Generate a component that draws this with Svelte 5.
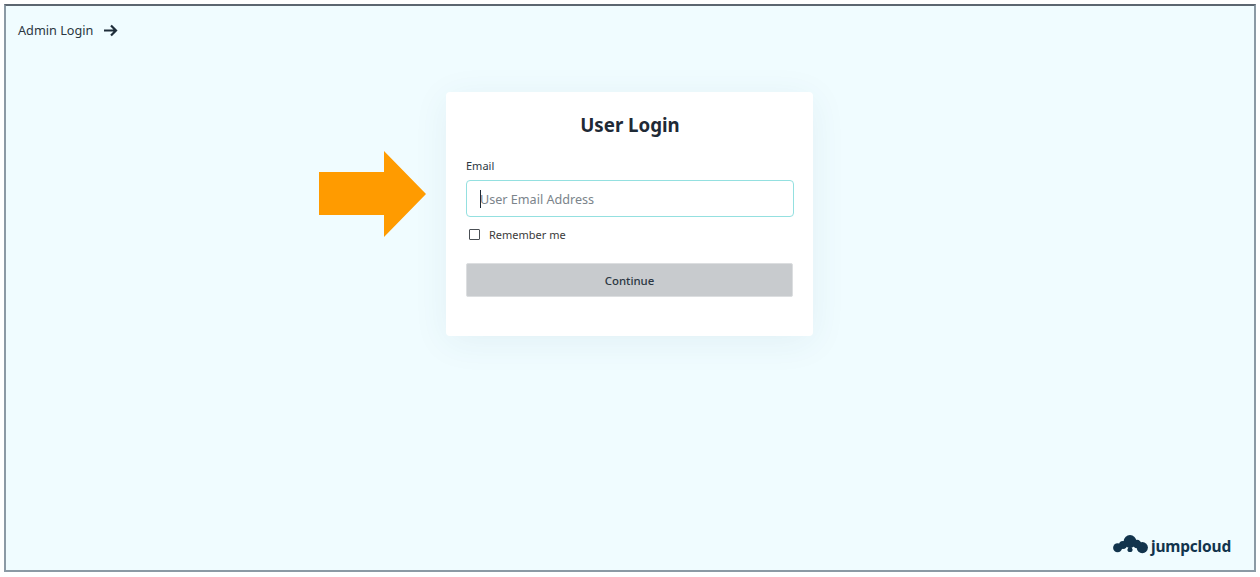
<script lang="ts">
  let email = $state('');
  let remember = $state(false);
</script>

<div class="page">
  <main class="frame">
    <a class="admin-link" href="#admin">
      Admin Login
      <svg width="15" height="13" viewBox="0 0 15 13" aria-hidden="true">
        <path d="M1 6.5h12M8 1.5l5 5-5 5" fill="none" stroke="#1f2d3a" stroke-width="2.2" />
      </svg>
    </a>

    <div class="card-wrap">
      <svg class="callout" width="108" height="86" viewBox="0 0 108 86" aria-hidden="true">
        <path d="M0 21h65V0l42 43-42 43V64H0z" fill="#ff9b00" />
      </svg>

      <form class="card">
        <h1>User Login</h1>
        <label class="field-label" for="email">Email</label>
        <div class="input-box">
          <span class="caret"></span>
          <input id="email" type="text" placeholder="User Email Address" bind:value={email} />
        </div>
        <label class="remember">
          <input type="checkbox" bind:checked={remember} />
          <span>Remember me</span>
        </label>
        <button type="button" class="continue">Continue</button>
      </form>
    </div>

    <div class="brand">
      <svg width="35" height="20" viewBox="0 0 35 20" aria-hidden="true">
        <g fill="#12344d">
          <circle cx="4.6" cy="12.8" r="4.5" />
          <circle cx="29.3" cy="12.6" r="5.6" />
          <circle cx="17" cy="6.5" r="6.4" />
          <circle cx="10" cy="10" r="4" />
          <circle cx="24" cy="9" r="4.2" />
          <circle cx="17" cy="14.5" r="2.6" />
        </g>
        <path d="M12.5 19v-3a3.5 3.5 0 0 1 2-3M21.5 19v-3a3.5 3.5 0 0 0-2-3" fill="none" stroke="#f0fcff" stroke-width="1.4" />
      </svg>
      <span>jumpcloud</span>
    </div>
  </main>
</div>

<style>
  :global(body) {
    margin: 0;
    background: #fff;
  }

  .page {
    height: 577px;
    box-sizing: border-box;
    padding: 4px 4px 5px 4px;
    font-family: 'Noto Sans', 'Open Sans', sans-serif;
    color: #212b36;
  }

  .frame {
    position: relative;
    height: 100%;
    box-sizing: border-box;
    display: flex;
    flex-direction: column;
    background: #f0fcff;
    border: 2px solid #8b9aa5;
    border-top: 2px solid #5c6670;
    padding: 15px 12px 14px;
  }

  .admin-link {
    display: flex;
    align-items: center;
    gap: 10px;
    height: 18px;
    font-size: 12.7px;
    color: #2b3742;
    text-decoration: none;
  }

  .card-wrap {
    position: relative;
    align-self: center;
    margin-top: 53px;
    margin-left: -1px;
  }

  .callout {
    position: absolute;
    left: -127px;
    top: 59px;
  }

  .card {
    width: 367px;
    height: 244px;
    box-sizing: border-box;
    padding: 19px 19px 0 20px;
    background: #fff;
    border-radius: 4px;
    box-shadow: 0 6px 36px rgba(40, 90, 110, 0.07);
    display: flex;
    flex-direction: column;
  }

  h1 {
    margin: 0 0 20px;
    font-size: 18.7px;
    line-height: 27px;
    font-weight: 700;
    text-align: center;
    color: #1f2a36;
  }

  .field-label {
    font-size: 11px;
    line-height: 16px;
    margin-bottom: 6px;
    color: #2b3742;
  }

  .input-box {
    position: relative;
    height: 37px;
    box-sizing: border-box;
    border: 1px solid #94e0e0;
    border-radius: 4px;
    display: flex;
    align-items: center;
    padding-left: 13px;
  }

  .caret {
    position: absolute;
    left: 13px;
    top: 9px;
    width: 1px;
    height: 18px;
    background: #1f2a36;
  }

  .input-box input {
    flex: 1;
    min-width: 0;
    border: 0;
    outline: 0;
    padding: 1px 0 0;
    background: transparent;
    font: inherit;
    font-size: 12.6px;
    color: #2b3742;
  }

  .input-box input::placeholder {
    color: #7b848b;
    opacity: 1;
  }

  .remember {
    display: flex;
    align-items: center;
    gap: 10px;
    margin: 8px 0 20px 3px;
    height: 18px;
    font-size: 11px;
    color: #3b3a3a;
  }

  .remember input {
    appearance: none;
    width: 11px;
    height: 11px;
    margin: 0 -1px 0 0;
    border: 1px solid #4a4f54;
    border-radius: 1px;
    background: #fff;
  }

  .continue {
    height: 34px;
    margin-right: 1px;
    border: 1px solid #dcdee0;
    border-radius: 2px;
    background: #c8cbce;
    font: inherit;
    font-size: 11.4px;
    font-weight: 500;
    color: #2b3742;
  }

  .brand {
    position: absolute;
    right: 23px;
    bottom: 15px;
    display: flex;
    align-items: flex-end;
    gap: 3px;
    color: #12344d;
    font-size: 15.5px;
    font-weight: 700;
    line-height: 18px;
    letter-spacing: -0.2px;
  }
</style>
